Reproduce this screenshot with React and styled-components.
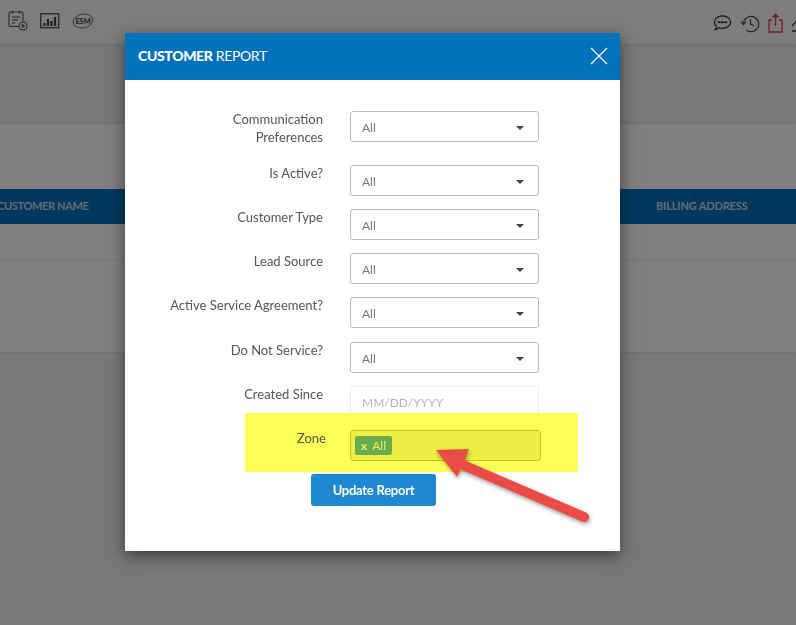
import styled, { createGlobalStyle } from 'styled-components';

const GlobalStyle = createGlobalStyle`
  html, body {
    margin: 0;
    padding: 0;
    height: 100%;
    overflow: hidden;
    background: #f0f0f0;
    font-family: Lato, "Open Sans", sans-serif;
  }
`;

const Page = styled.div`
  width: 796px;
  height: 625px;
  overflow: hidden;
  background: #f0f0f0;
`;

const TopBar = styled.div`
  display: flex;
  justify-content: space-between;
  align-items: flex-start;
  height: 44px;
  box-sizing: border-box;
  background: #fafafa;
  box-shadow: 0 1px 3px rgba(0, 0, 0, 0.1);
  padding-left: 8px;
`;

const IconGroup = styled.div`
  display: flex;
  align-items: center;
  gap: ${props => props.$gap}px;
  padding-top: ${props => props.$top}px;
  margin-right: ${props => props.$right || 0}px;
  opacity: 0.85;
`;

const Card = styled.div`
  margin-top: 80px;
  height: 228px;
  background: #fff;
  box-shadow: 0 0 3px rgba(0, 0, 0, 0.15);
  padding-top: 65px;
  box-sizing: border-box;
`;

const TableHead = styled.div`
  display: flex;
  align-items: center;
  height: 35px;
  padding: 0 0 2px 656px;
  box-sizing: border-box;
  background: #0271bb;
  color: #c8d8e4;
  font-size: 11px;
  font-weight: 700;
  letter-spacing: -0.15px;
  white-space: nowrap;
  position: relative;
`;

const FirstColumn = styled.span`
  position: absolute;
  left: -3px;
  letter-spacing: -0.35px;
`;

const TableRow = styled.div`
  height: 35px;
  border-bottom: 1px solid #ececec;
`;

const Overlay = styled.div`
  position: fixed;
  inset: 0;
  background: rgba(0, 0, 0, 0.5);
`;

const Modal = styled.div`
  position: absolute;
  left: 125px;
  top: 33px;
  width: 495px;
  height: 518px;
  background: #fff;
  box-shadow: 0 5px 15px rgba(0, 0, 0, 0.5);
`;

const ModalHeader = styled.div`
  display: flex;
  justify-content: space-between;
  align-items: center;
  height: 47px;
  padding: 0 12px 2px 13px;
  box-sizing: border-box;
  background: #0271bb;
  color: #fff;
`;

const ModalTitle = styled.h4`
  margin: 0;
  font-size: 14px;
  font-weight: 400;
  letter-spacing: -0.35px;

  b {
    font-weight: 900;
  }
`;

const Form = styled.div`
  display: flex;
  flex-direction: column;
  align-items: flex-start;
  padding-top: 31px;
`;

const Row = styled.div`
  display: grid;
  grid-template-columns: 198px 189px;
  column-gap: 27px;
  width: 100%;
  margin-bottom: ${props => props.$gap}px;
`;

const Label = styled.label`
  margin-top: -1px;
  text-align: right;
  font-size: 13px;
  line-height: 18px;
  color: #555;
`;

const SelectBox = styled.div`
  display: flex;
  justify-content: space-between;
  align-items: center;
  height: 31px;
  box-sizing: border-box;
  border: 1px solid #bbb;
  border-radius: 3px;
  padding: 2px 14px 0 11px;
  font-size: 12px;
  color: #777;
`;

const Caret = styled.span`
  width: 0;
  height: 0;
  border-left: 4px solid transparent;
  border-right: 4px solid transparent;
  border-top: 4px solid #444;
`;

const DateInput = styled.div`
  display: flex;
  align-items: center;
  height: 31px;
  box-sizing: border-box;
  border: 1px solid #ececec;
  padding: 2px 11px 0;
  font-size: 12px;
  color: #b5b5b5;
`;

const HighlightBand = styled.div`
  display: grid;
  grid-template-columns: 81px 191px;
  column-gap: 24px;
  width: 333px;
  height: 59px;
  margin-left: 120px;
  box-sizing: border-box;
  padding-top: 17px;
  background: #ffff55;
`;

const ZoneBox = styled.div`
  display: flex;
  align-items: center;
  height: 31px;
  box-sizing: border-box;
  border: 1px solid #c6c41f;
  border-radius: 3px;
  background: #eeee44;
  padding-left: 4px;
`;

const Tag = styled.span`
  display: inline-flex;
  align-items: center;
  gap: 5px;
  height: 19px;
  padding: 0 6px;
  border-radius: 2px;
  background: #67ad50;
  color: #f0f060;
  font-size: 12px;
`;

const TagClose = styled.span`
  font-weight: 700;
`;

const SubmitRow = styled.div`
  display: flex;
  padding: 2px 0 0 186px;
`;

const SubmitButton = styled.button`
  width: 125px;
  height: 32px;
  border: 0;
  border-radius: 3px;
  background: #1e88d2;
  color: #fff;
  font-family: inherit;
  font-size: 13px;
  font-weight: 700;
  letter-spacing: -0.25px;
`;

const CloseIcon = styled.svg`
  display: block;
`;

const Arrow = styled.svg`
  position: absolute;
  left: 425px;
  top: 440px;
  filter: drop-shadow(1px 2px 2px rgba(0, 0, 0, 0.4));
`;

const selects = [
  { id: 'comm', label: <>Communication<br />Preferences</>, gap: 19 },
  { id: 'active', label: 'Is Active?', gap: 13 },
  { id: 'type', label: 'Customer Type', gap: 13 },
  { id: 'lead', label: 'Lead Source', gap: 13 },
  { id: 'agreement', label: 'Active Service Agreement?', gap: 14 },
  { id: 'service', label: 'Do Not Service?', gap: 13 },
];

const App = () => (
  <>
    <GlobalStyle />
    <Page>
      <TopBar>
        <IconGroup $gap={12} $top={10}>
          <svg width="20" height="21" viewBox="0 0 20 21" fill="none" stroke="#333" strokeWidth="1.1">
            <path d="M11 16.500H2.500A1.500 1.500 0 0 1 1 15V3.500A1.500 1.500 0 0 1 2.500 2h11A1.500 1.500 0 0 1 15 3.500V11" />
            <path d="M4.500 0.500v3M11.500 0.500v3M4 7h8M4 10h6M4 13h3" />
            <circle cx="15" cy="16" r="4" />
            <path d="M15 14v4M13 16h4" />
          </svg>
          <svg width="20" height="16" viewBox="0 0 20 16" fill="none" stroke="#222">
            <rect x="0.750" y="0.750" width="18" height="14" strokeWidth="1.2" />
            <path d="M4.500 13v-3M8 13V6M11.500 13V8M15 13V4" strokeWidth="2.200" />
          </svg>
          <svg width="22" height="18" viewBox="0 0 24 18" fill="none">
            <ellipse cx="12" cy="9" rx="11" ry="7.500" stroke="#555" transform="rotate(-10 12 9)" />
            <text x="12" y="12" textAnchor="middle" fontSize="8" fontWeight="900" fontFamily="Lato" fill="#222">ESM</text>
          </svg>
        </IconGroup>
        <IconGroup $gap={8} $top={13} $right={-9}>
          <svg width="19" height="18" viewBox="0 0 20 18" fill="none" stroke="#111" strokeWidth="1.300">
            <path d="M10 1.500c4.700 0 8.500 2.900 8.500 6.600s-3.800 6.500-8.500 6.500c-1.300 0-2.400-.2-3.400-.6L2.500 16l1.200-3.600C2.200 11.300 1.500 9.800 1.500 8.100 1.500 4.400 5.300 1.500 10 1.500z" />
            <path d="M6 8.200h1M9.500 8.200h1M13 8.200h1" strokeWidth="2.200" strokeLinecap="round" />
          </svg>
          <svg width="20" height="19" viewBox="0 0 22 20" fill="none" stroke="#222" strokeWidth="1.300">
            <path d="M3.800 10a8.400 8.400 0 1 1 3 7" />
            <path d="M1 8l2.800 3.200L6.600 8M11.500 5v5.500l3.800 2" />
          </svg>
          <svg width="15" height="20" viewBox="0 0 15 20" fill="none" stroke="#e02020" strokeWidth="1.300">
            <path d="M4 7H1v12h13V7h-3M7.500 13V2" />
            <path d="M4.500 4.500l3-3.300 3 3.300" fill="#e02020" />
          </svg>
          <svg width="14" height="20" viewBox="0 0 14 20" fill="none" stroke="#222" strokeWidth="1.300">
            <path d="M1 13l7-8 6 5M1 18h13" />
          </svg>
        </IconGroup>
      </TopBar>
      <Card>
        <TableHead>
          <FirstColumn>CUSTOMER NAME</FirstColumn>
          BILLING ADDRESS
        </TableHead>
        <TableRow />
      </Card>
    </Page>
    <Overlay />
    <Modal>
      <ModalHeader>
        <ModalTitle><b>CUSTOMER</b> REPORT</ModalTitle>
        <CloseIcon width="18" height="18" viewBox="0 0 18 18" stroke="#fff" strokeWidth="1.200">
          <path d="M1 1l16 16M17 1L1 17" />
        </CloseIcon>
      </ModalHeader>
      <Form>
        {selects.map(item => (
          <Row key={item.id} $gap={item.gap}>
            <Label>{item.label}</Label>
            <SelectBox>All<Caret /></SelectBox>
          </Row>
        ))}
        <Row $gap={-4}>
          <Label>Created Since</Label>
          <DateInput>MM/DD/YYYY</DateInput>
        </Row>
        <HighlightBand>
          <Label>Zone</Label>
          <ZoneBox><Tag><TagClose>x</TagClose><span>All</span></Tag></ZoneBox>
        </HighlightBand>
        <SubmitRow><SubmitButton>Update Report</SubmitButton></SubmitRow>
      </Form>
    </Modal>
    <Arrow width="170" height="90" viewBox="0 0 170 90">
      <path d="M159 77L38 25" stroke="#ea4b45" strokeWidth="10" strokeLinecap="round" />
      <path d="M11 10L44 9 32 37z" fill="#ea4b45" />
    </Arrow>
  </>
);

export default App;
